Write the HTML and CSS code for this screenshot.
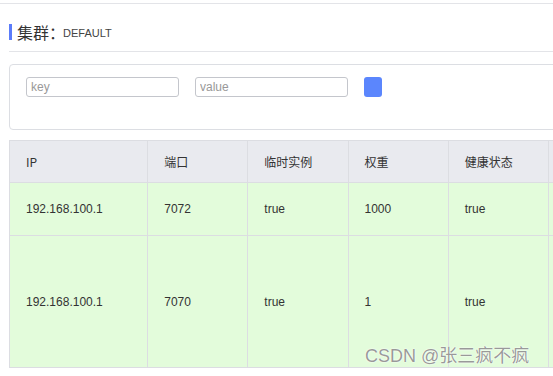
FILE: index.html
```html
<!DOCTYPE html>
<html lang="zh-CN">
<head>
  <meta charset="UTF-8">
  <meta name="viewport" content="width=device-width, initial-scale=1">
  <title>集群详情</title>
  <link rel="stylesheet" href="styles.css">
</head>
<body>
  <div class="frame">
    <div class="top-line"></div>
    <div class="page">
      <div class="cluster-title">
        <span class="cluster-label">集群：</span>
        <span class="cluster-name">DEFAULT</span>
      </div>

      <div class="filter-box">
        <input type="text" class="filter-input" placeholder="key">
        <input type="text" class="filter-input" placeholder="value">
        <button class="filter-btn"></button>
      </div>

      <table class="instances">
        <thead>
          <tr>
            <th class="col-ip">IP</th>
            <th>端口</th>
            <th>临时实例</th>
            <th>权重</th>
            <th>健康状态</th>
            <th class="col-more"></th>
          </tr>
        </thead>
        <tbody>
          <tr class="row-short">
            <td>192.168.100.1</td>
            <td>7072</td>
            <td>true</td>
            <td>1000</td>
            <td>true</td>
            <td></td>
          </tr>
          <tr class="row-tall">
            <td>192.168.100.1</td>
            <td>7070</td>
            <td>true</td>
            <td>1</td>
            <td>true</td>
            <td></td>
          </tr>
        </tbody>
      </table>
    </div>

    <div class="watermark">CSDN @张三疯不疯</div>
  </div>
</body>
</html>
```

FILE: styles.css
```css
* {
  box-sizing: border-box;
}

body {
  margin: 0;
  background: #ffffff;
  color: #333333;
  font-family: "Liberation Sans", "Noto Sans CJK SC", sans-serif;
  font-size: 12px;
}

.frame {
  width: 553px;
  height: 376px;
  overflow: hidden;
  position: relative;
}

.top-line {
  margin-top: 3px;
  height: 1px;
  background: #e3e4e8;
}

.page {
  width: 700px;
  padding-left: 9px;
}

.cluster-title {
  margin-top: 20px;
  height: 28px;
  border-bottom: 1px solid #e3e4e8;
  display: flex;
  align-items: flex-start;
}

.cluster-label {
  border-left: 3px solid #5b7cfa;
  padding-left: 5px;
  height: 16px;
  line-height: 16px;
  font-size: 16px;
  color: #333333;
  font-family: "Noto Sans CJK SC", sans-serif;
}

.cluster-name {
  margin-left: -2px;
  font-size: 11px;
  line-height: 18px;
  color: #444444;
}

.filter-box {
  margin-top: 12px;
  height: 66px;
  border: 1px solid #dcdee3;
  border-radius: 4px;
  padding: 12px 16px;
  display: flex;
  align-items: flex-start;
  gap: 16px;
}

.filter-input {
  width: 153px;
  height: 20px;
  margin: 0;
  padding: 0 4px;
  border: 1px solid #c4c6cc;
  border-radius: 3px;
  font-family: "Liberation Sans", "Noto Sans CJK SC", sans-serif;
  font-size: 12px;
  color: #333333;
  outline: none;
}

.filter-input::placeholder {
  color: #999999;
}

.filter-btn {
  width: 18px;
  height: 20px;
  padding: 0;
  border: none;
  border-radius: 3px;
  background: #5b86fd;
}

.instances {
  margin-top: 10px;
  border-collapse: collapse;
  table-layout: fixed;
  width: 640px;
}

.instances th,
.instances td {
  border: 1px solid #dcdde2;
  padding: 0 16px;
  text-align: left;
  font-weight: normal;
  width: 100px;
}

.instances .col-ip {
  width: 138px;
}

.instances .col-more {
  width: 100px;
}

.instances th {
  height: 42px;
  background: #e9eaef;
  color: #333333;
  font-family: "Noto Sans CJK SC", sans-serif;
}

.instances td {
  background: #e3fcdb;
  color: #333333;
}

.row-short td {
  height: 53px;
}

.row-tall td {
  height: 132px;
}

.watermark {
  position: absolute;
  left: 365px;
  top: 341px;
  font-size: 18px;
  font-family: "Liberation Sans", "Noto Sans CJK SC", sans-serif;
  color: rgba(120, 120, 120, 0.75);
  text-shadow: 0 0 2px #ffffff, 0 0 1px #ffffff;
  white-space: nowrap;
}
```
